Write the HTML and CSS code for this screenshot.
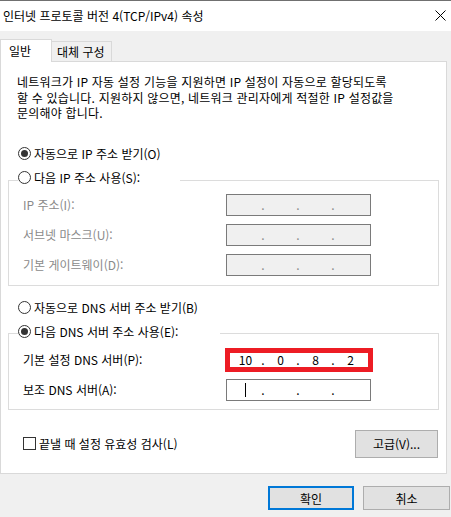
FILE: index.html
```html
<!DOCTYPE html>
<html lang="ko">
<head>
<meta charset="utf-8">
<title>인터넷 프로토콜 버전 4(TCP/IPv4) 속성</title>
<link rel="stylesheet" href="styles.css">
</head>
<body>
<div class="window">
	<div class="titlebar">
		<span class="title">인터넷 프로토콜 버전 4(TCP/IPv4) 속성</span>
		<svg class="close" width="11" height="11" viewBox="0 0 11 11"><path d="M0.5 0.5 L10.5 10.5 M10.5 0.5 L0.5 10.5" stroke="#000" stroke-width="1" fill="none"/></svg>
	</div>
	<div class="client">
		<div class="tabs">
			<div class="tab on">일반</div>
			<div class="tab">대체 구성</div>
		</div>
		<div class="panel">
			<p class="intro">네트워크가 IP 자동 설정 기능을 지원하면 IP 설정이 자동으로 할당되도록<br>할 수 있습니다. 지원하지 않으면, 네트워크 관리자에게 적절한 IP 설정값을<br>문의해야 합니다.</p>

			<div class="option first"><span class="radio checked"></span>자동으로 IP 주소 받기(O)</div>

			<div class="group g1">
				<div class="group-title"><span class="radio"></span>다음 IP 주소 사용(S):</div>
				<div class="fields disabled">
					<span class="label">IP 주소(I):</span>
					<div class="ip"><span class="oct"></span><span class="dot">.</span><span class="oct"></span><span class="dot">.</span><span class="oct"></span><span class="dot">.</span><span class="oct"></span></div>
					<span class="label">서브넷 마스크(U):</span>
					<div class="ip"><span class="oct"></span><span class="dot">.</span><span class="oct"></span><span class="dot">.</span><span class="oct"></span><span class="dot">.</span><span class="oct"></span></div>
					<span class="label">기본 게이트웨이(D):</span>
					<div class="ip"><span class="oct"></span><span class="dot">.</span><span class="oct"></span><span class="dot">.</span><span class="oct"></span><span class="dot">.</span><span class="oct"></span></div>
				</div>
			</div>

			<div class="option second"><span class="radio"></span>자동으로 DNS 서버 주소 받기(B)</div>

			<div class="group g2">
				<div class="group-title"><span class="radio checked"></span>다음 DNS 서버 주소 사용(E):</div>
				<div class="fields">
					<span class="label">기본 설정 DNS 서버(P):</span>
					<div class="ip marked"><span class="oct">10</span><span class="dot">.</span><span class="oct">0</span><span class="dot">.</span><span class="oct">8</span><span class="dot">.</span><span class="oct">2</span></div>
					<span class="label">보조 DNS 서버(A):</span>
					<div class="ip"><span class="oct"><i class="caret"></i></span><span class="dot">.</span><span class="oct"></span><span class="dot">.</span><span class="oct"></span><span class="dot">.</span><span class="oct"></span></div>
				</div>
			</div>

			<div class="bottom-row">
				<div class="check"><span class="box"></span>끝낼 때 설정 유효성 검사(L)</div>
				<button class="btn advanced">고급(V)...</button>
			</div>
		</div>
		<div class="actions">
			<button class="btn ok">확인</button>
			<button class="btn cancel">취소</button>
		</div>
	</div>
</div>
</body>
</html>
```

FILE: styles.css
```css
*{
	margin: 0;
	padding: 0;
	box-sizing: border-box;
}
body{
	width: 451px;
	height: 517px;
	overflow: hidden;
	font-family: "Noto Sans CJK KR", "Noto Sans", sans-serif;
	font-size: 12px;
	line-height: 16px;
	color: #000;
	background: #f0f0f0;
}
.window{
	height: 517px;
	border-top: 1px solid #707070;
}
.titlebar{
	height: 30px;
	background: #fff;
	display: flex;
	align-items: center;
	justify-content: space-between;
	padding: 0 5px 0 3px;
}
.title{
	font-size: 12px;
	white-space: nowrap;
}
.close{
	display: block;
	margin-top: -1px;
}
.client{
	padding-top: 8px;
}

/* tabs */
.tabs{
	display: flex;
	align-items: flex-end;
	height: 22px;
}
.tab{
	height: 20px;
	width: 61px;
	margin-left: -1px;
	border: 1px solid #d9d9d9;
	border-bottom: none;
	background: #f0f0f0;
	padding-left: 5px;
	line-height: 19px;
}
.tab.on{
	position: relative;
	z-index: 1;
	height: 23px;
	width: 52px;
	margin-left: 0;
	margin-bottom: -1px;
	background: #fff;
	padding-left: 8px;
	line-height: 22px;
}

/* panel */
.panel{
	width: 447px;
	height: 413px;
	border: 1px solid #d9d9d9;
	background: #fff;
}
.intro{
	margin: 12px 0 0 16px;
	white-space: nowrap;
	line-height: 15.5px;
	letter-spacing: 0.2px;
}
.option{
	display: flex;
	align-items: center;
	height: 16px;
	margin-left: 17px;
	white-space: nowrap;
}
.option.first{
	margin-top: 25px;
}
.option.second{
	margin-top: 14px;
}
.radio{
	width: 13px;
	height: 13px;
	border: 1px solid #333;
	border-radius: 50%;
	background: #fff;
	margin-right: 3px;
	display: flex;
	align-items: center;
	justify-content: center;
	flex: none;
}
.radio.checked::after{
	content: "";
	width: 7px;
	height: 7px;
	border-radius: 50%;
	background: #333;
}

/* group boxes */
.group{
	border: 1px solid #dcdcdc;
	margin: 18px 7px 0 7px;
	padding-bottom: 9px;
}
.g2{
	margin-top: 17px;
	padding-bottom: 8px;
}
.group-title{
	display: flex;
	align-items: center;
	height: 16px;
	margin: -11px 0 0 9px;
	background: #fff;
	white-space: nowrap;
}
.g1 .group-title{
	width: 162px;
}
.g2 .group-title{
	width: 202px;
	margin-top: -10px;
}
.fields{
	display: grid;
	grid-template-columns: 203px 145px;
	row-gap: 8px;
	align-items: center;
	padding-left: 14px;
	margin-top: 8px;
}
.g2 .fields{
	margin-top: 9px;
}
.label{
	white-space: nowrap;
}
.fields.disabled .label{
	color: #8a8a8a;
}
.ip{
	display: flex;
	align-items: center;
	width: 145px;
	height: 22px;
	border: 1px solid #7a7a7a;
	padding-left: 3px;
	background: #fff;
}
.fields.disabled .ip{
	background: #f0f0f0;
	color: #8a8a8a;
}
.ip.marked{
	width: 148px;
	height: 24px;
	margin: -1px 0 -1px -1px;
	border: 5px solid #ed1c24;
	padding-left: 0;
}
.oct{
	width: 31px;
	text-align: center;
	display: flex;
	justify-content: center;
	align-items: center;
}
.dot{
	width: 4px;
	text-align: center;
}
.caret{
	display: block;
	width: 1px;
	height: 14px;
	background: #000;
}

/* bottom */
.bottom-row{
	display: flex;
	align-items: center;
	justify-content: space-between;
	margin-top: 20px;
	padding: 0 8px 0 22px;
}
.check{
	display: flex;
	align-items: center;
	white-space: nowrap;
}
.box{
	width: 13px;
	height: 13px;
	border: 1px solid #333;
	margin-right: 3px;
}
.btn{
	font-family: inherit;
	font-size: 12px;
	color: #000;
	background: #e1e1e1;
	border: 1px solid #adadad;
}
.advanced{
	width: 83px;
	height: 28px;
}
.actions{
	display: flex;
	justify-content: flex-end;
	gap: 9px;
	margin-top: 12px;
	padding-right: 1px;
}
.ok{
	width: 86px;
	height: 24px;
	border: 2px solid #0078d7;
}
.cancel{
	width: 87px;
	height: 24px;
}
```
